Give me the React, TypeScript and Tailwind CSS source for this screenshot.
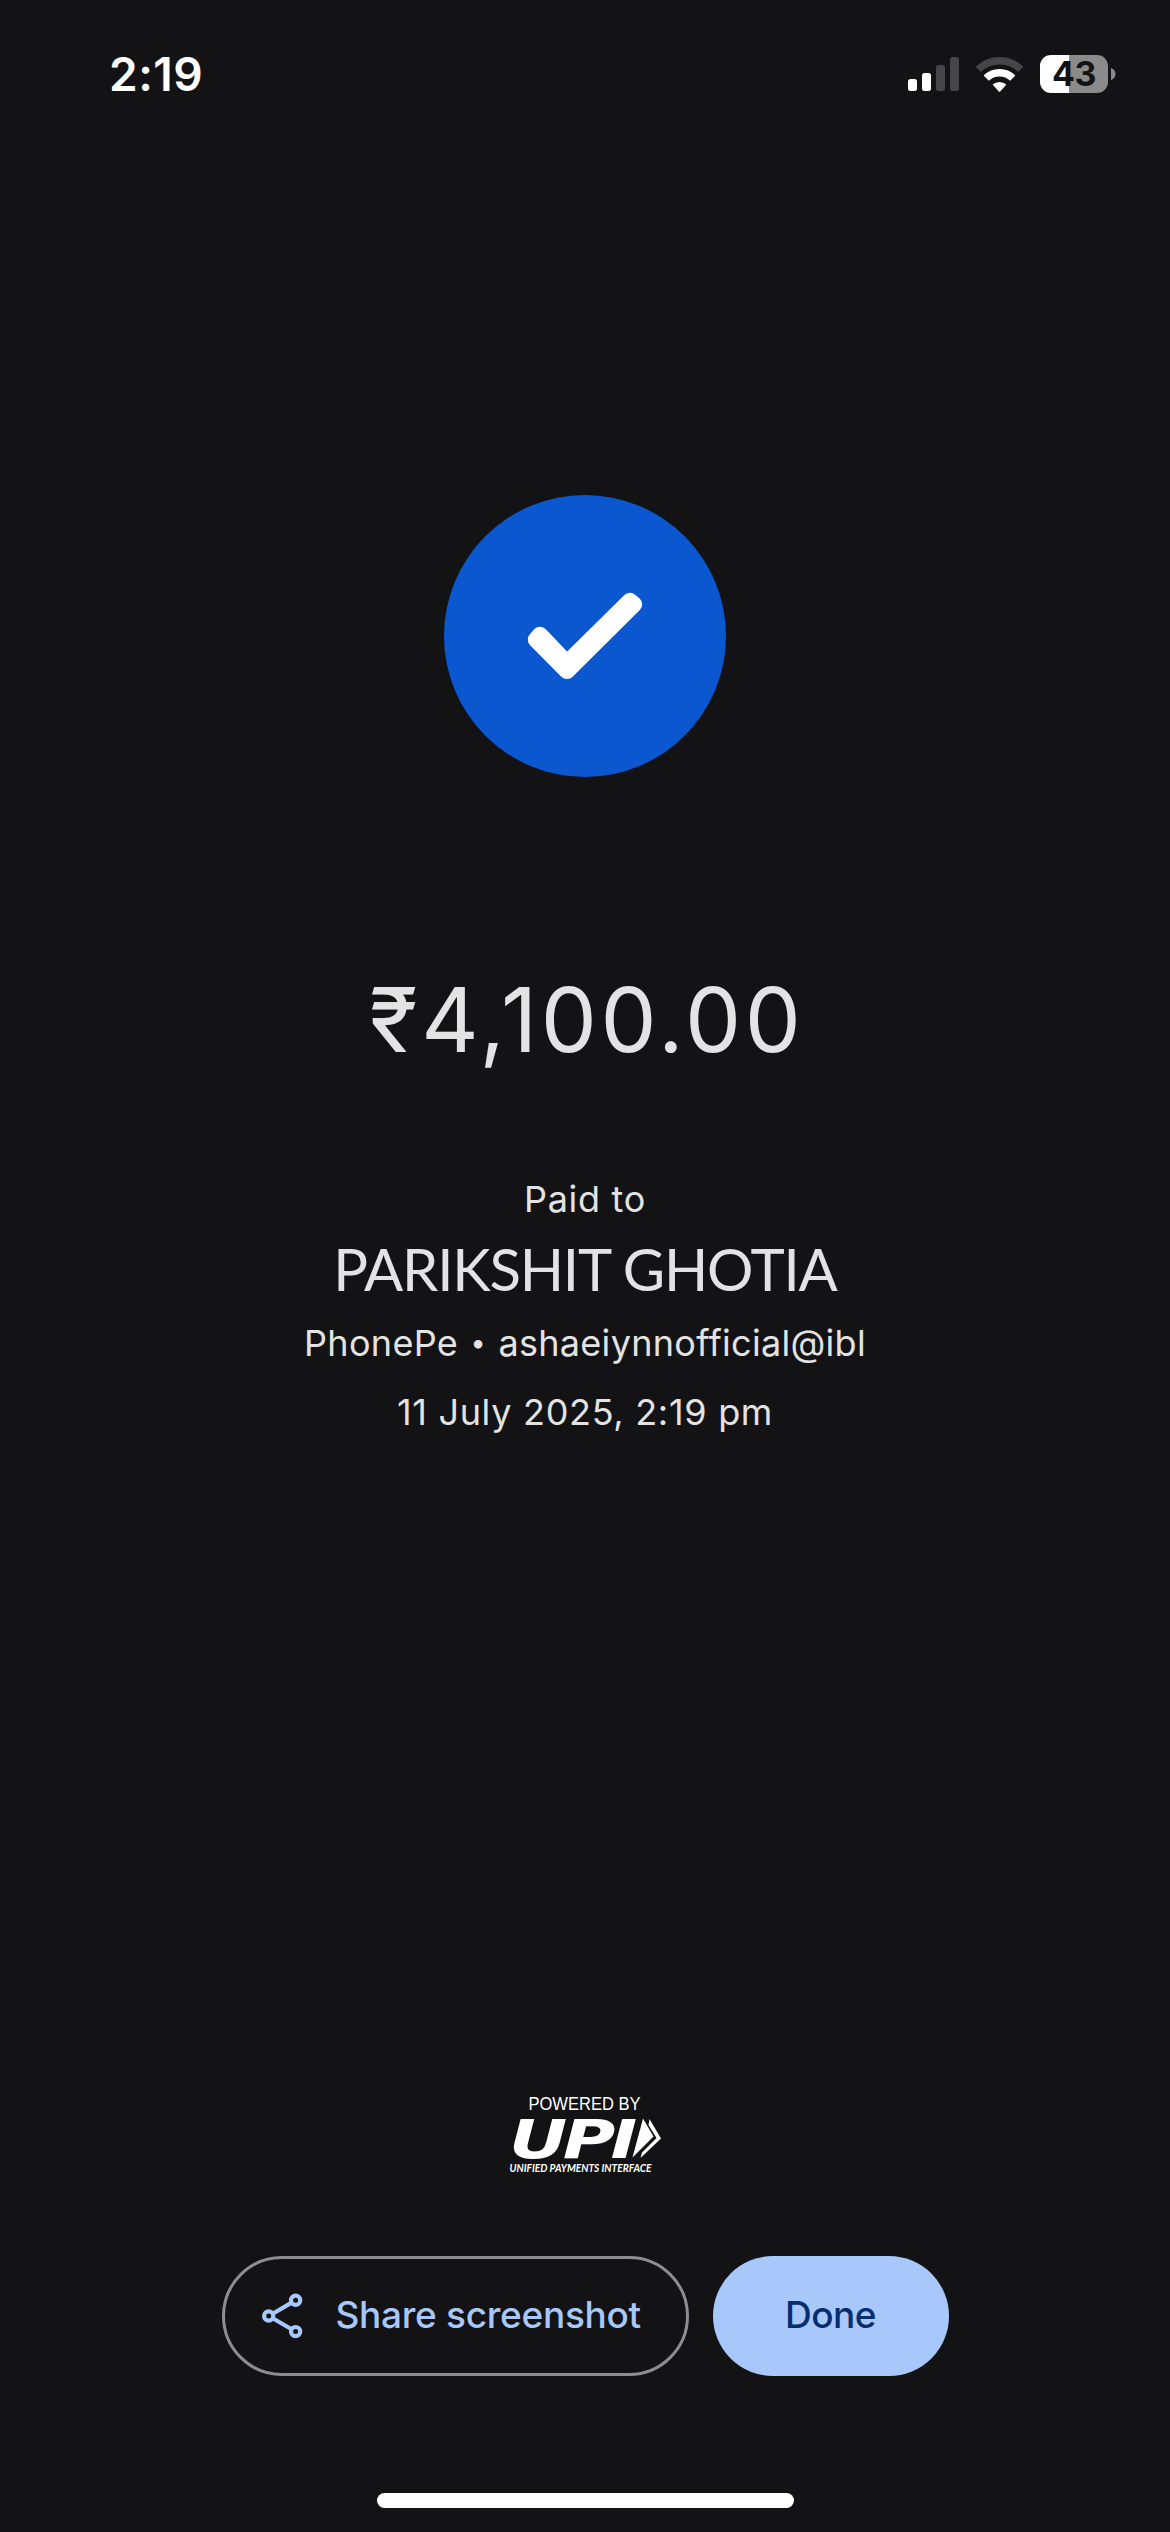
import React from 'react';

function SignalIcon() {
  return (
    <svg width="51" height="34" viewBox="0 0 51 34" fill="#fff">
      <rect x="0" y="22" width="9" height="12" rx="2.5" />
      <rect x="14" y="16" width="9" height="18" rx="2.5" />
      <rect x="28" y="8" width="9" height="26" rx="2.5" fill="#464648" />
      <rect x="42" y="0" width="9" height="34" rx="2.5" fill="#464648" />
    </svg>
  );
}

function WifiIcon() {
  return (
    <svg width="49" height="37" viewBox="0 0 49 37" fill="none">
      <path d="M3.2 13.4 A30.6 30.6 0 0 1 45.8 13.4" stroke="#464648" strokeWidth="7.4" />
      <path d="M11.2 22.2 A19 19 0 0 1 37.8 22.2" stroke="#fff" strokeWidth="7.4" />
      <path d="M17.6 28.6 A10.4 10.4 0 0 1 31.4 28.6 L25.2 35.4 Q24.5 36.1 23.8 35.4 Z" fill="#fff" />
    </svg>
  );
}

function Battery() {
  return (
    <div className="flex items-center gap-[3px]">
      <div className="flex h-[38px] w-[68px] items-center justify-center rounded-[11px] bg-linear-to-r from-white from-[29px] to-[#8b8b8c] to-[29px]">
        <span className="text-[34px] leading-none font-bold tracking-[-0.5px] text-[#131315]">43</span>
      </div>
      <svg width="5" height="12" viewBox="0 0 5 12" fill="#8b8b8c">
        <path d="M0 0 C2.8 1 4.5 3.2 4.5 6 S2.8 11 0 12 Z" />
      </svg>
    </div>
  );
}

function StatusBar() {
  return (
    <div className="flex h-[148px] items-center pr-[54px] pl-[109px]">
      <span className="text-[46px] leading-none font-semibold tracking-[0.5px] text-white">2:19</span>
      <div className="ml-auto flex items-center">
        <SignalIcon />
        <div className="mr-4 ml-4">
          <WifiIcon />
        </div>
        <Battery />
      </div>
    </div>
  );
}

function SuccessBadge() {
  return (
    <svg width="282" height="282" viewBox="0 0 282 282">
      <circle cx="141" cy="141" r="141" fill="#0b57d0" />
      <path
        d="M96 139.8 L91.8 144.5 L123 176 L190.2 109.3 L186 105.8 L123 168 Z"
        fill="#fff"
        stroke="#fff"
        strokeWidth="16"
        strokeLinejoin="round"
      />
    </svg>
  );
}

function UpiLogo() {
  return (
    <svg width="190" height="90" viewBox="0 0 190 90" fill="#fff">
      <text x="38.5" y="20" textLength="112" lengthAdjust="spacingAndGlyphs" className="font-['Liberation_Sans',sans-serif] text-[18px]">
        POWERED BY
      </text>
      <text transform="translate(19 68) scale(1.33 1)" className="font-['DejaVu_Sans',sans-serif] text-[54px] font-bold tracking-[-3.5px] italic">
        UPI
      </text>
      <path d="M153 28.5 L163.5 46.5 L142.5 67.5 Z" />
      <path d="M159.5 29 L171 48.5 L150.5 68 L152 62.5 L166.5 48 L158.5 35 Z" />
      <text x="19.5" y="82" textLength="142" lengthAdjust="spacingAndGlyphs" className="font-['Lato',sans-serif] text-[10.5px] font-bold italic">
        UNIFIED PAYMENTS INTERFACE
      </text>
    </svg>
  );
}

function ShareIcon() {
  return (
    <svg width="41" height="46" viewBox="0 0 41 46" fill="none" stroke="#a8c7fa" strokeWidth="4.2">
      <circle cx="33.6" cy="7.3" r="4.6" />
      <circle cx="6.7" cy="23" r="4.6" />
      <circle cx="33.6" cy="38.6" r="4.6" />
      <path d="M10.7 20.7 L29.6 9.6 M10.7 25.3 L29.6 36.3" />
    </svg>
  );
}

function App() {
  return (
    <div className="flex h-[2532px] w-[1170px] flex-col bg-[#131315] font-['Inter',sans-serif] text-[#e3e3e3]">
      <StatusBar />

      <main className="flex flex-col items-center pt-[347px]">
        <SuccessBadge />
        <h1 className="mt-[193px] pl-1 text-[89px] leading-[100px] font-normal tracking-[3.6px] whitespace-nowrap">₹4,100.00</h1>
        <p className="mt-[105px] text-[36px] leading-[48px] tracking-[0.7px]">Paid to</p>
        <h2 className="mt-[14px] font-['Lato',sans-serif] text-[58px] leading-[64px] tracking-[-1.2px] whitespace-nowrap">
          PARIKSHIT GHOTIA
        </h2>
        <p className="mt-[18px] flex items-center text-[36px] leading-[48px] tracking-[0.3px] whitespace-pre">
          PhonePe <span className="px-0.5 text-[27px]">•</span> ashaeiynnofficial@ibl
        </p>
        <p className="mt-[21px] text-[36px] leading-[48px] tracking-[0.7px] whitespace-nowrap">11 July 2025, 2:19 pm</p>
      </main>

      <footer className="mt-auto flex flex-col items-center pb-6">
        <UpiLogo />
        <div className="mt-[76px] flex gap-6">
          <button className="flex h-[120px] w-[467px] items-center rounded-full border-3 border-[#8e8e8e] pl-[37px] text-[37px] font-medium tracking-[-0.3px] text-[#a8c7fa]">
            <ShareIcon />
            <span className="ml-[33px] pb-[3px] whitespace-nowrap">Share screenshot</span>
          </button>
          <button className="h-[120px] w-[236px] rounded-full bg-[#a8c7fa] pb-[3px] text-[37px] font-medium tracking-[-0.5px] text-[#062e6f]">
            Done
          </button>
        </div>
        <div className="mt-[117px] h-[15px] w-[417px] rounded-full bg-white" />
      </footer>
    </div>
  );
}

export default App;
